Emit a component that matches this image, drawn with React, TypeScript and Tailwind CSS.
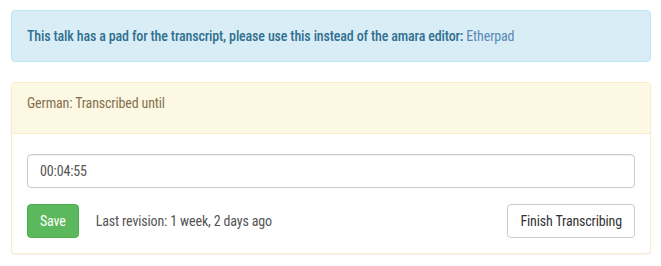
export default function App() {
  return (
    <div className="bg-white w-[661px] h-[266px] pt-[10px] pl-[11px] pr-[10px] text-[14px] leading-[20px] font-['Roboto',sans-serif] [font-stretch:75%] tracking-[-0.15px]">
      <div className="rounded-[4px] border border-[#bce8f1] bg-[#d9edf7] text-[#31708f] p-[15px]">
        <span className="font-medium">This talk has a pad for the transcript, please use this instead of the amara editor: </span>
        <a className="text-[#5a87b5]">Etherpad</a>
      </div>
      <div className="mt-[20px] rounded-[4px] border border-[#faebcc] bg-white shadow-[0_1px_1px_rgba(0,0,0,0.05)]">
        <div className="bg-[#fcf8e3] text-[#85704f] border-b border-[#faebcc] px-[15px] pt-[10px] pb-[20px] rounded-t-[3px]">
          German: Transcribed until
        </div>
        <div className="px-[15px] pt-[20px] pb-[15px]">
          <div className="h-[34px] rounded-[4px] border border-[#ccc] px-[12px] flex items-center text-[#555] shadow-[inset_0_1px_1px_rgba(0,0,0,0.075)]">
            00:04:55
          </div>
          <div className="mt-[16px] flex items-center">
            <div className="h-[34px] px-[12px] rounded-[4px] bg-[#5cb85c] border border-[#4cae4c] text-white flex items-center">Save</div>
            <span className="ml-[17px] text-[#555]">Last revision: 1 week, 2 days ago</span>
            <div className="ml-auto h-[34px] px-[12px] rounded-[4px] bg-white border border-[#ccc] text-[#333] flex items-center">Finish Transcribing</div>
          </div>
        </div>
      </div>
    </div>
  );
}
